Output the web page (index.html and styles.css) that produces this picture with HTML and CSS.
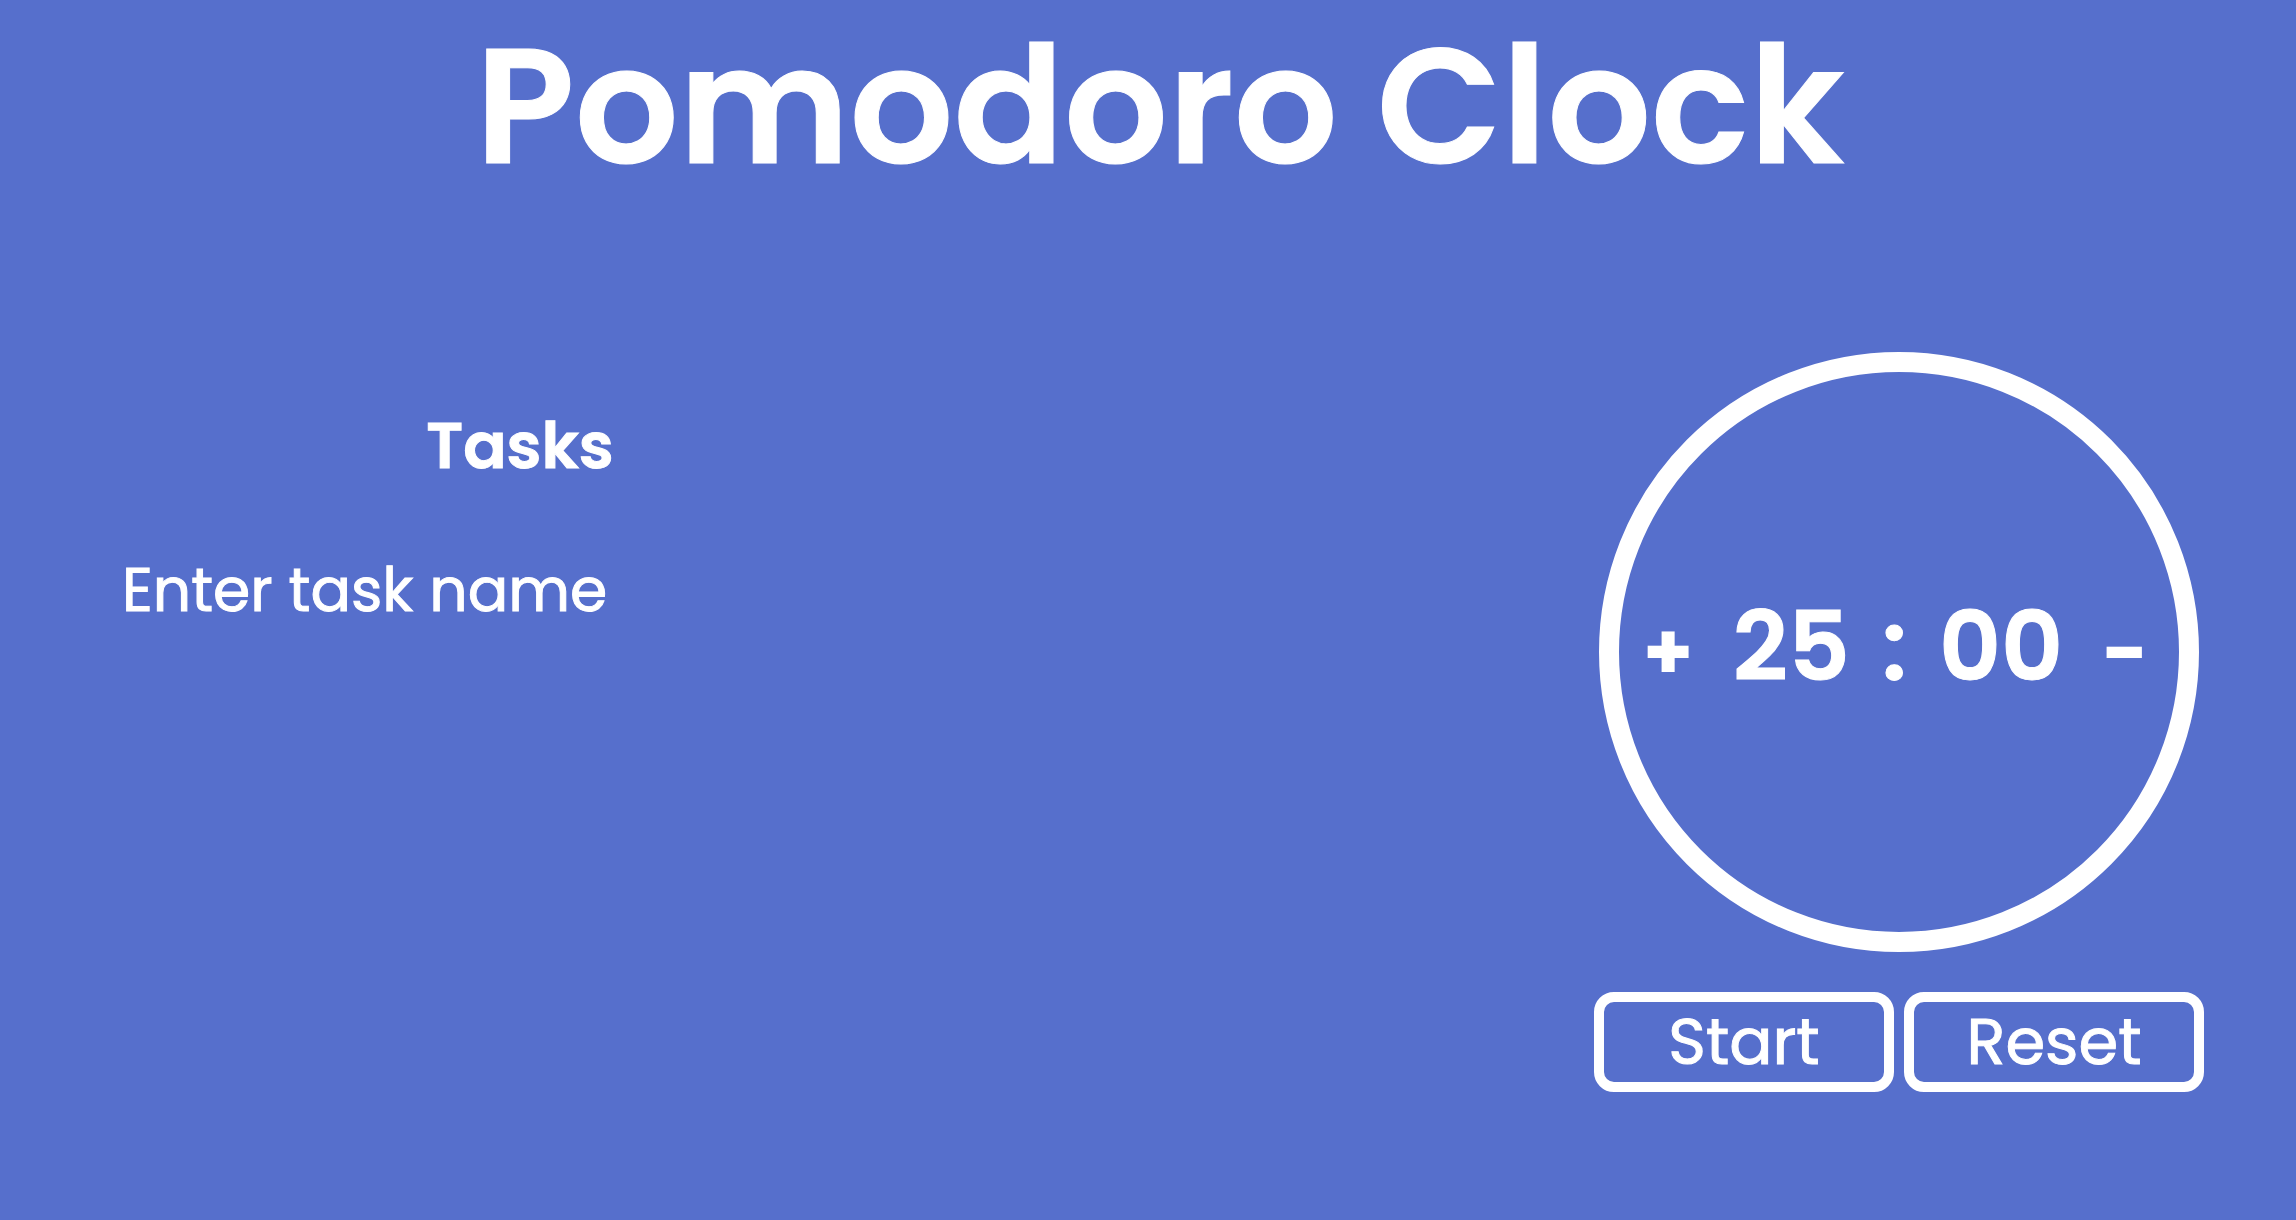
FILE: index.html
```
<!DOCTYPE html>
<html lang="en">
<head>
<meta charset="utf-8">
<title>Pomodoro Clock</title>
<link rel="stylesheet" href="styles.css">
</head>
<body>
<header class="page-header"><h1 class="title">Pomodoro Clock</h1></header>
<main class="content">
  <section class="tasks">
    <h2 class="tasks-title">Tasks</h2>
    <input class="task-input" type="text" placeholder="Enter task name" aria-label="Task name">
  </section>
  <section class="timer">
    <div class="dial">
      <button class="adjust" type="button" aria-label="Add a minute">+</button>
      <div class="time"><span>25</span><span>:</span><span>00</span></div>
      <button class="adjust" type="button" aria-label="Remove a minute">-</button>
    </div>
    <div class="actions">
      <button class="action" type="button">Start</button>
      <button class="action" type="button">Reset</button>
    </div>
  </section>
</main>
</body>
</html>
```
FILE: styles.css
```
* { box-sizing: border-box; }
body {
  margin: 0;
  background: #566fcc;
  color: #fff;
  font-family: Poppins, Inter, sans-serif;
  -webkit-text-stroke: 1px currentColor;
}
button, input {
  padding: 0;
  border: 0;
  background: none;
  color: inherit;
  font: inherit;
}
.page-header { padding: 0 0 0 24px; }
.title {
  margin: 0;
  font-size: 163px;
  font-weight: 600;
  line-height: 212px;
  text-align: center;
}
.content {
  display: flex;
  justify-content: space-between;
  padding: 140px 92px 0 120px;
}
.tasks { width: 800px; padding-top: 46px; }
.tasks-title {
  margin: 0;
  width: 100%;
  font-size: 64px;
  font-weight: 600;
  line-height: 96px;
  text-align: center;
}
.task-input {
  width: 100%;
  height: 96px;
  margin-top: 48px;
  padding-left: 2px;
  font-size: 60px;
}
.task-input::placeholder { color: inherit; opacity: 1; }
.timer {
  display: flex;
  flex-direction: column;
  align-items: center;
  gap: 40px;
}
.dial {
  display: flex;
  align-items: center;
  justify-content: space-between;
  width: 600px;
  height: 600px;
  padding: 0 30px 0 24px;
  border: 20px solid #fff;
  border-radius: 50%;
}
.adjust {
  font-size: 80px;
  font-weight: 700;
  -webkit-text-stroke: 0;
}
.time {
  display: flex;
  gap: 32px;
  padding-bottom: 12px;
  font-size: 96px;
  font-weight: 600;
}
.actions { display: flex; gap: 10px; }
.action {
  width: 300px;
  height: 100px;
  border: 10px solid #fff;
  border-radius: 20px;
  font-size: 64px;
  line-height: 80px;
}
```
